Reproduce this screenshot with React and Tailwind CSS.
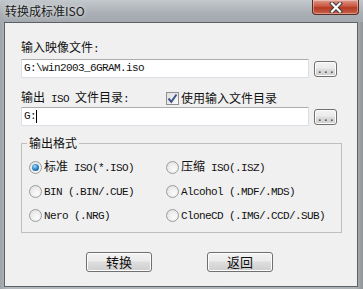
import React from 'react';

const mono = "font-['Liberation_Mono',monospace] text-[11px] tracking-[-0.6px]";
const btn =
  'flex items-center justify-center rounded-[3px] border border-[#707070] bg-[linear-gradient(#f3f3f3_0%,#ebebeb_45%,#dddddd_50%,#cfcfcf_100%)] shadow-[inset_0_0_0_1px_#fcfcfc]';

function Radio({ checked, children }) {
  return (
    <div className="flex items-center h-[24px]">
      <span className="w-[13px] h-[13px] rounded-full border border-[#9a9c9c] bg-[radial-gradient(circle_at_60%_65%,#fbfbfb_0%,#ececec_55%,#d6d6d6_100%)] flex items-center justify-center">
        {checked && (
          <span className="w-[7px] h-[7px] rounded-full bg-[radial-gradient(circle_at_40%_35%,#a6dcf7_0%,#2f8ccc_45%,#0d3f6e_100%)]" />
        )}
      </span>
      <span className="ml-[2px] leading-[14px] text-[#111]">{children}</span>
    </div>
  );
}

function Browse() {
  return (
    <button className={`${btn} w-[23px] h-[16px] ml-[5px] items-end pb-[1px]`}>
      <span className={`${mono} leading-[10px] text-[#333]`}>...</span>
    </button>
  );
}

export default function App() {
  return (
    <div className="w-[363px] h-[289px] flex flex-col bg-[linear-gradient(90deg,#9ea4a9,#b4b9bd_2%,#aeb3b8_98%,#8f9499)] font-['Noto_Sans_CJK_SC',sans-serif] text-[12px] text-[#111] overflow-hidden">
      {/* title bar */}
      <div className="h-[22px] flex items-start justify-between bg-[linear-gradient(#c3c8cc,#a9afb4_60%,#a3a9ae)]">
        <span className="ml-[5px] mt-[3px] leading-[15px] text-[12px] text-[#1a1a1a] [text-shadow:0_0_5px_rgba(255,255,255,0.9)]">
          转换成标准ISO
        </span>
        <div className="mr-[4px] w-[47px] h-[15px] rounded-b-[4px] border border-t-0 border-[#5b2a24] bg-[linear-gradient(#e09a8c,#c9563f_45%,#b43a22_55%,#c8624c)] flex items-center justify-center shadow-[inset_0_0_0_1px_rgba(255,255,255,0.35)]">
          <svg width="14" height="11" viewBox="0 0 14 11">
            <path d="M3 1.5 L11 9.5 M11 1.5 L3 9.5" stroke="#3a3a3a" strokeWidth="4" strokeLinecap="square" />
            <path d="M3 1.5 L11 9.5 M11 1.5 L3 9.5" stroke="#ffffff" strokeWidth="2.2" strokeLinecap="square" />
          </svg>
        </div>
      </div>

      {/* client area */}
      <div className="ml-[4px] mr-[5px] h-[265px] border border-[#5d6166] bg-[#f0f0f0] flex flex-col pl-[16px]">
        <div className="mt-[17px] leading-[14px]">
          输入映像文件<span className={mono}>:</span>
        </div>
        <div className="mt-[3px] flex items-center">
          <div className="w-[288px] h-[19px] bg-white border border-[#dbdfe6] border-t-[#abadb3] flex items-center pl-[2px]">
            <span className={`${mono} text-[#111]`}>G:\win2003_6GRAM.iso</span>
          </div>
          <Browse />
        </div>

        <div className="mt-[12px] h-[16px] flex items-center">
          <div className="w-[145px] leading-[14px]">
            输出<span className={mono}> ISO </span>文件目录<span className={mono}>:</span>
          </div>
          <span className="w-[13px] h-[13px] border border-[#8e8f8f] bg-[linear-gradient(135deg,#dedede,#fbfbfb)] flex items-center justify-center">
            <svg width="11" height="11" viewBox="0 0 11 11">
              <path d="M1.5 5.5 L4.3 8.8 L9.5 1.5" fill="none" stroke="#3e5687" strokeWidth="2" />
            </svg>
          </span>
          <span className="ml-[2px] leading-[14px]">使用输入文件目录</span>
        </div>
        <div className="mt-[1px] flex items-center">
          <div className="w-[288px] h-[19px] bg-white border border-[#dbdfe6] border-t-[#abadb3] flex items-center pl-[2px]">
            <span className={mono}>G:</span>
            <span className="w-px h-[13px] bg-black" />
          </div>
          <Browse />
        </div>

        {/* group box */}
        <div className="mt-[17px] w-[321px] border border-[#bdbfc1] flex flex-col pl-[7px] pb-[5px]">
          <span className="-mt-[8px] -ml-[2px] self-start px-[2px] bg-[#f0f0f0] leading-[14px]">输出格式</span>
          <div className="mt-[5px] grid grid-cols-[137px_1fr]">
            <Radio checked>
              标准<span className={mono}> ISO(*.ISO)</span>
            </Radio>
            <Radio>
              压缩<span className={mono}> ISO(.ISZ)</span>
            </Radio>
            <Radio>
              <span className={mono}>BIN (.BIN/.CUE)</span>
            </Radio>
            <Radio>
              <span className={mono}>Alcohol (.MDF/.MDS)</span>
            </Radio>
            <Radio>
              <span className={mono}>Nero (.NRG)</span>
            </Radio>
            <Radio>
              <span className={mono}>CloneCD (.IMG/.CCD/.SUB)</span>
            </Radio>
          </div>
        </div>

        <div className="mt-[19px] flex pl-[65px] gap-[55px]">
          <button className={`${btn} w-[66px] h-[20px] text-[13px] leading-[14px]`}>转换</button>
          <button className={`${btn} w-[66px] h-[20px] text-[13px] leading-[14px]`}>返回</button>
        </div>
      </div>
    </div>
  );
}
